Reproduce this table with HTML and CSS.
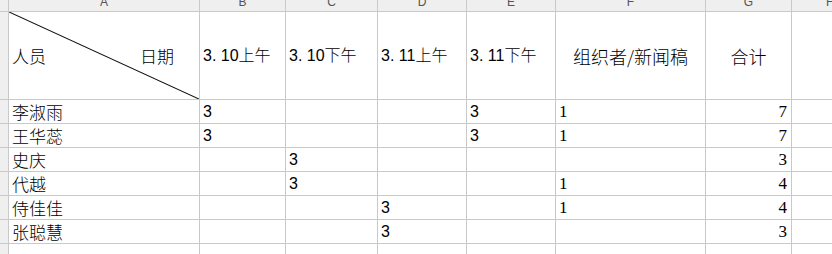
FILE: index.html
```html
<!DOCTYPE html>
<html lang="zh">
<head>
<meta charset="utf-8">
<title>排班统计</title>
<link rel="stylesheet" href="styles.css">
</head>
<body>
<div class="sheet">
  <div class="hd corner"></div>
  <div class="hd col"><span>A</span></div>
  <div class="hd col"><span>B</span></div>
  <div class="hd col"><span>C</span></div>
  <div class="hd col"><span>D</span></div>
  <div class="hd col"><span>E</span></div>
  <div class="hd col"><span>F</span></div>
  <div class="hd col"><span>G</span></div>
  <div class="hd col col-h"><span>H</span></div>

  <div class="hd rowhd"></div>
  <div class="c diag">
    <svg class="diag-line" viewBox="0 0 190 87" preserveAspectRatio="none"><line x1="0" y1="0" x2="190" y2="87" stroke="#111" stroke-width="1.1"/></svg>
    <span>人员</span><span>日期</span>
  </div>
  <div class="c th">3. 10上午</div>
  <div class="c th">3. 10下午</div>
  <div class="c th">3. 11上午</div>
  <div class="c th">3. 11下午</div>
  <div class="c th center">组织者/新闻稿</div>
  <div class="c th center">合计</div>
  <div class="c"></div>

  <div class="hd rowhd"></div>
  <div class="c name">李淑雨</div>
  <div class="c num">3</div><div class="c"></div><div class="c"></div>
  <div class="c num">3</div><div class="c snum">1</div><div class="c tot">7</div><div class="c"></div>

  <div class="hd rowhd"></div>
  <div class="c name">王华蕊</div>
  <div class="c num">3</div><div class="c"></div><div class="c"></div>
  <div class="c num">3</div><div class="c snum">1</div><div class="c tot">7</div><div class="c"></div>

  <div class="hd rowhd"></div>
  <div class="c name">史庆</div>
  <div class="c"></div><div class="c num">3</div><div class="c"></div>
  <div class="c"></div><div class="c"></div><div class="c tot">3</div><div class="c"></div>

  <div class="hd rowhd"></div>
  <div class="c name">代越</div>
  <div class="c"></div><div class="c num">3</div><div class="c"></div>
  <div class="c"></div><div class="c snum">1</div><div class="c tot">4</div><div class="c"></div>

  <div class="hd rowhd"></div>
  <div class="c name">侍佳佳</div>
  <div class="c"></div><div class="c"></div><div class="c num">3</div>
  <div class="c"></div><div class="c snum">1</div><div class="c tot">4</div><div class="c"></div>

  <div class="hd rowhd"></div>
  <div class="c name">张聪慧</div>
  <div class="c"></div><div class="c"></div><div class="c num">3</div>
  <div class="c"></div><div class="c"></div><div class="c tot">3</div><div class="c"></div>

  <div class="hd rowhd"></div>
  <div class="c"></div><div class="c"></div><div class="c"></div><div class="c"></div>
  <div class="c"></div><div class="c"></div><div class="c"></div><div class="c"></div>
</div>
</body>
</html>
```
FILE: styles.css
```css
html, body {
  margin: 0;
  padding: 0;
  background: #ffffff;
  overflow: hidden;
}

.sheet {
  display: grid;
  grid-template-columns: 8px 190px 85px 91px 88px 88px 149px 85px 60px;
  grid-template-rows: 11px 87px 23px 23px 23px 23px 23px 23px 20px;
  gap: 1px;
  background: #c9c9c9;
  width: 852px;
  height: 262px;
  font-family: "Noto Sans CJK SC", sans-serif;
  font-weight: 300;
  color: #000;
}

.hd {
  background: #efefef;
  overflow: hidden;
}

.col {
  display: flex;
  justify-content: center;
  font-family: "Liberation Sans", sans-serif;
  font-weight: 400;
  font-size: 12px;
  line-height: 12px;
  color: #555;
}

.col span {
  display: block;
  margin-top: -4px;
}

.col-h {
  justify-content: flex-start;
  padding-left: 34px;
}

.c {
  background: #ffffff;
  font-size: 16px;
  line-height: 23px;
  padding: 0 3px;
  white-space: nowrap;
  overflow: hidden;
}

.diag {
  position: relative;
  display: flex;
  justify-content: space-between;
  align-items: center;
  padding: 0 25px 0 3px;
  line-height: 20px;
  font-size: 17px;
}

.diag-line {
  position: absolute;
  left: 0;
  top: 0;
  width: 100%;
  height: 100%;
}

.th {
  display: flex;
  align-items: center;
  font-family: "Liberation Sans", "Noto Sans CJK SC", sans-serif;
  line-height: 20px;
}

.center {
  justify-content: center;
  font-family: "Noto Sans CJK SC", sans-serif;
  font-size: 18px;
}

.name {
  font-family: "Noto Sans CJK SC", sans-serif;
  font-size: 17px;
}

.num {
  font-family: "Liberation Sans", sans-serif;
  font-weight: 400;
}

.snum {
  font-family: "Liberation Serif", serif;
  font-weight: 400;
  font-size: 17px;
}

.tot {
  font-family: "Liberation Serif", serif;
  font-weight: 400;
  font-size: 17px;
  text-align: right;
  padding-right: 4px;
}
```
